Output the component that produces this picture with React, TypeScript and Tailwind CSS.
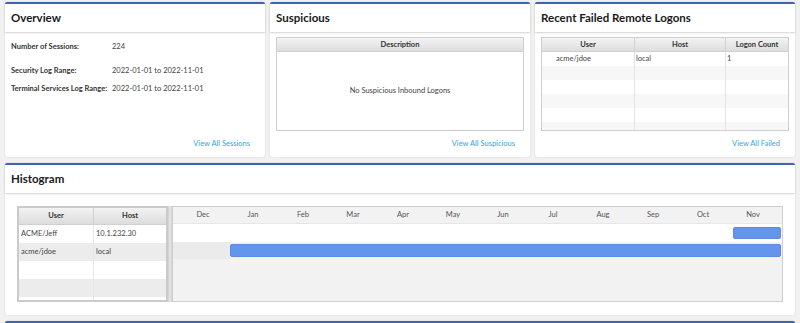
import React from 'react'

const MONTHS = ['Dec', 'Jan', 'Feb', 'Mar', 'Apr', 'May', 'Jun', 'Jul', 'Aug', 'Sep', 'Oct', 'Nov']

const FAILED_ROWS = [
  { user: 'acme/jdoe', host: 'local', count: '1' },
  { user: '', host: '', count: '' },
  { user: '', host: '', count: '' },
  { user: '', host: '', count: '' },
  { user: '', host: '', count: '' },
  { user: '', host: '', count: '' },
]

const HIST_USERS = [
  { user: 'ACME/Jeff', host: '10.1.232.30' },
  { user: 'acme/jdoe', host: 'local' },
  { user: '', host: '' },
  { user: '', host: '' },
  { user: '', host: '' },
]

function Card({ title, children, className = '' }: { title: string; children?: React.ReactNode; className?: string }) {
  return (
    <div className={`flex flex-col bg-white rounded-[3px] shadow-[0_0_2px_rgba(0,0,0,0.12)] ${className}`}>
      <div className="h-[30px] flex-shrink-0 flex items-center px-[6px] border-t-2 border-[#3d66b0] rounded-t-[2px] shadow-[0_1px_2px_rgba(0,0,0,0.18)] text-[11.5px] font-bold text-[#1a1a1a] whitespace-nowrap">
        {title}
      </div>
      <div className="flex-1 flex flex-col mt-[1px] min-h-0">{children}</div>
    </div>
  )
}

function ViewLink({ label }: { label: string }) {
  return (
    <div className="mt-auto flex justify-end pr-[15px] pb-[8px] text-[7.5px] text-[#3aa2da]">{label}</div>
  )
}

export default function App() {
  return (
    <div className="w-[800px] h-[323px] overflow-hidden bg-[#f1f1f1] px-[5px] pt-[2px] flex flex-col gap-[6px] text-[#444]" style={{ fontFamily: 'Lato, "Noto Sans", sans-serif' }}>
      {/* Top row */}
      <div className="grid grid-cols-3 gap-[5px] h-[155px] flex-shrink-0">
        <Card title="Overview">
          <div className="px-[6px] pt-[8px] text-[7.5px] whitespace-nowrap">
            <div className="flex h-[12px] items-center mb-[12px]">
              <span className="w-[101px] font-bold text-[#333]">Number of Sessions:</span>
              <span>224</span>
            </div>
            <div className="flex h-[12px] items-center mb-[6px]">
              <span className="w-[101px] font-bold text-[#333]">Security Log Range:</span>
              <span>2022-01-01 to 2022-11-01</span>
            </div>
            <div className="flex h-[12px] items-center">
              <span className="w-[101px] font-bold text-[#333]">Terminal Services Log Range:</span>
              <span>2022-01-01 to 2022-11-01</span>
            </div>
          </div>
          <ViewLink label="View All Sessions" />
        </Card>

        <Card title="Suspicious">
          <div className="mx-[6px] mt-[4px] h-[94px] border border-[#cfcfcf] flex flex-col">
            <div className="h-[14px] flex items-center justify-center bg-gradient-to-b from-[#f3f3f3] to-[#dedede] border-b border-[#d0d0d0] text-[7.5px] font-bold text-[#333]">
              Description
            </div>
            <div className="flex-1 flex items-center justify-center text-[7.5px] text-[#444]">No Suspicious Inbound Logons</div>
          </div>
          <ViewLink label="View All Suspicious" />
        </Card>

        <Card title="Recent Failed Remote Logons">
          <div className="mx-[6px] mt-[4px] h-[94px] border border-[#cfcfcf] flex flex-col overflow-hidden">
            <div className="h-[14px] flex-shrink-0 grid grid-cols-[93px_91px_1fr] bg-gradient-to-b from-[#f3f3f3] to-[#dedede] border-b border-[#d0d0d0] text-[7.5px] font-bold text-[#333]">
              <div className="flex items-center justify-center border-r border-[#d0d0d0]">User</div>
              <div className="flex items-center justify-center border-r border-[#d0d0d0]">Host</div>
              <div className="flex items-center justify-center">Logon Count</div>
            </div>
            {FAILED_ROWS.map((r, i) => (
              <div key={i} className={`h-[14px] flex-shrink-0 grid grid-cols-[93px_91px_1fr] text-[7.5px] ${i % 2 === 1 ? 'bg-[#f7f7f7]' : 'bg-white'}`}>
                <div className="flex items-center pl-[14px] border-r border-[#e4e4e4]">{r.user}</div>
                <div className="flex items-center pl-[1px] border-r border-[#e4e4e4]">{r.host}</div>
                <div className="flex items-center pl-[1px]">{r.count}</div>
              </div>
            ))}
          </div>
          <ViewLink label="View All Failed" />
        </Card>
      </div>

      {/* Histogram */}
      <Card title="Histogram" className="h-[152px] flex-shrink-0">
        <div className="flex px-[12px] pt-[12px] h-[108px]">
          <div className="w-[151px] flex-shrink-0 border-2 border-[#cacaca] flex flex-col overflow-hidden">
            <div className="h-[17px] flex-shrink-0 grid grid-cols-[75px_1fr] bg-gradient-to-b from-[#f3f3f3] to-[#dcdcdc] border-b border-[#d0d0d0] text-[7.5px] font-bold text-[#333]">
              <div className="flex items-center justify-center border-r border-[#d0d0d0]">User</div>
              <div className="flex items-center justify-center">Host</div>
            </div>
            {HIST_USERS.map((r, i) => (
              <div key={i} className={`h-[18px] flex-shrink-0 grid grid-cols-[75px_1fr] text-[7.5px] ${i % 2 === 1 ? 'bg-[#ececec]' : 'bg-white'}`}>
                <div className="flex items-center pl-[2px] border-r border-[#e6e6e6]">{r.user}</div>
                <div className="flex items-center pl-[2px]">{r.host}</div>
              </div>
            ))}
          </div>
          <div className="w-[4px] flex-shrink-0 bg-[#e2e2e2] border-x border-[#d4d4d4]" />
          <div className="flex-1 border border-[#cfcfcf] bg-[#f2f2f2] flex flex-col overflow-hidden">
            <div className="h-[17px] flex-shrink-0 flex pl-[5px] border-b border-[#e6e6e6] text-[7.5px] text-[#555]">
              {MONTHS.map(m => (
                <div key={m} className="w-[50px] flex items-center justify-center">{m}</div>
              ))}
            </div>
            <div className="h-[18px] flex-shrink-0 bg-white flex items-center pl-[560px] pr-[1px]">
              <div className="h-[12px] flex-1 rounded-[2px] bg-[#6495ed] border border-[#5b8ae0]" />
            </div>
            <div className="h-[17px] flex-shrink-0 flex items-center">
              <div className="w-[57px] h-full bg-[#ebebeb]" />
              <div className="h-[13px] flex-1 mr-[1px] rounded-[2px] bg-[#6495ed] border border-[#5b8ae0]" />
            </div>
          </div>
        </div>
      </Card>

      <Card title="" className="h-[40px] flex-shrink-0" />
    </div>
  )
}
